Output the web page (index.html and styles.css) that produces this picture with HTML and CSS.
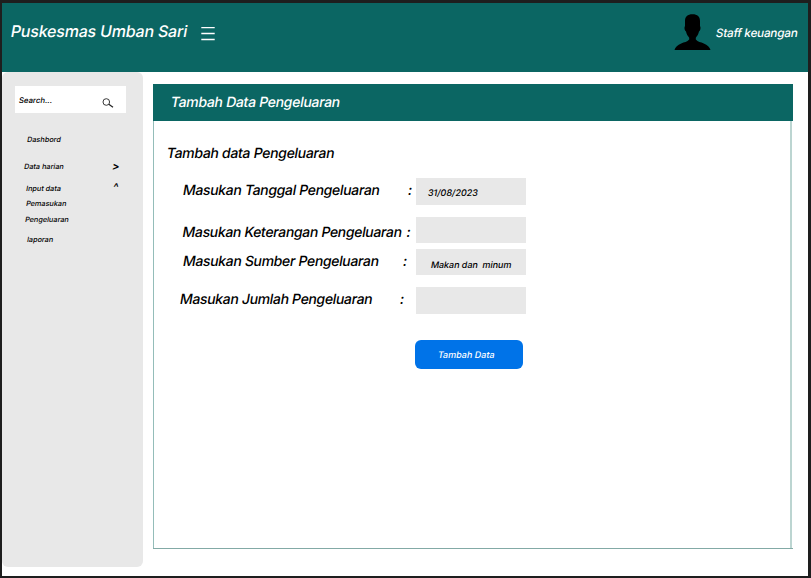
FILE: index.html
```html
<!DOCTYPE html>
<html lang="id">
<head>
<meta charset="utf-8">
<title>Puskesmas Umban Sari</title>
<link rel="stylesheet" href="styles.css">
</head>
<body>
<div class="page">
  <header class="topbar">
    <h1 class="brand"><span class="t">Puskesmas Umban Sari</span></h1>
    <svg class="menu" width="14" height="14" viewBox="0 0 14 14"><path d="M.3 .7h13.400M.3 6.500h13.400M.3 12.500h13.400" stroke="#fff" stroke-width="1.300"/></svg>
    <svg class="avatar" width="37" height="37" viewBox="0 0 37 37"><path d="M18.500.2C23.500.2 26 2.500 26 7v5c1 1.500.5 4.500-1 5.500-.5 2.500-1.700 4.500-3.200 6.200v1.800c2 2.500 5 2.500 8 4 3.500 1.500 6 3.700 6.700 6.500H.5c.7-2.800 3.200-5 6.700-6.500 3-1.500 6-1.500 8-4v-1.800c-1.500-1.700-2.700-3.700-3.200-6.200-1.500-1-2-4-1-5.500V7c0-4.500 2.500-6.800 7.500-6.800z"/></svg>
    <span class="user t">Staff keuangan</span>
  </header>
  <div class="content">
    <nav class="sidebar">
      <div class="search">
        <span class="t">Search...</span>
        <svg width="12" height="10" viewBox="0 0 12 10" fill="none" stroke="#222"><circle cx="4.300" cy="4" r="3.300" stroke-width=".9"/><path d="M6.800 6.200l4.200 3" stroke-width="1.200"/></svg>
      </div>
      <a class="item dash"><span class="t">Dashbord</span></a>
      <a class="item harian"><span class="t">Data harian</span><b class="t arrow">&gt;</b></a>
      <a class="item input"><span class="t">Input data</span><b class="t caret">^</b></a>
      <a class="item masuk"><span class="t">Pemasukan</span></a>
      <a class="item keluar"><span class="t">Pengeluaran</span></a>
      <a class="item laporan"><span class="t">laporan</span></a>
    </nav>
    <main class="panel">
      <h2 class="panel-title"><span class="t">Tambah Data Pengeluaran</span></h2>
      <form class="form">
        <h3 class="form-title"><span class="t">Tambah data Pengeluaran</span></h3>
        <div class="row tanggal"><label class="t">Masukan Tanggal Pengeluaran</label><i class="t">:</i><div class="field"><span class="t">31/08/2023</span></div></div>
        <div class="row keterangan"><label class="t">Masukan Keterangan Pengeluaran</label><i class="t">:</i><div class="field"></div></div>
        <div class="row sumber"><label class="t">Masukan Sumber Pengeluaran</label><i class="t">:</i><div class="field"><span class="t">Makan dan&nbsp; minum</span></div></div>
        <div class="row jumlah"><label class="t">Masukan Jumlah Pengeluaran</label><i class="t">:</i><div class="field"></div></div>
        <button class="submit" type="button"><span class="t">Tambah Data</span></button>
      </form>
    </main>
  </div>
</div>
</body>
</html>
```
FILE: styles.css
```css
* { box-sizing: border-box; }
body {
  margin: 0;
  height: 578px;
  padding: 3px 3px 2px 2px;
  background: #1e1e1e;
  font-family: Inter, "Liberation Sans", sans-serif;
  font-weight: 450;
  color: #000;
}
h1, h2, h3 { margin: 0; font-weight: 450; }
.t { display: inline-block; font-style: normal; transform: skewX(-10deg); white-space: nowrap; }
.page { height: 573px; background: #fff; }
.topbar {
  height: 69px;
  display: flex;
  align-items: flex-start;
  padding-left: 9px;
  background: #0b6663;
  color: #fff;
}
.brand { width: 190px; padding-top: 18px; font-size: 16px; line-height: 21px; letter-spacing: -0.2px; }
.menu { margin-top: 24px; }
.avatar { margin: 11px 0 0 459px; }
.user { margin: 22px 0 0 5px; font-size: 11.7px; line-height: 16px; letter-spacing: -0.2px; }
.content { display: flex; align-items: flex-start; gap: 10px; }
.sidebar {
  width: 141px;
  height: 495px;
  padding-top: 14px;
  display: flex;
  flex-direction: column;
  background: #e8e8e8;
  border-radius: 6px;
}
.search {
  width: 111px;
  height: 27px;
  margin: 0 0 22px 13px;
  padding: 0 12px 0 4px;
  display: flex;
  align-items: center;
  justify-content: space-between;
  background: #fff;
  font-size: 7.8px;
}
.search svg { margin-top: 6px; }
.item { display: flex; height: 10px; line-height: 10px; font-size: 7.3px; padding-right: 24px; justify-content: space-between; }
.item b { font-weight: 600; font-size: 11px; }
.item .arrow { margin-top: -1px; }
.item .caret { margin: -2px 1px 0 0; }
.dash { padding-left: 25px; }
.harian { padding-left: 22px; margin-top: 17px; }
.input { padding-left: 24px; margin-top: 12px; }
.masuk { padding-left: 23.5px; margin-top: 5px; }
.keluar { padding-left: 23px; margin-top: 6px; }
.laporan { padding-left: 25px; margin-top: 10px; }
.panel {
  width: 640px;
  height: 465px;
  margin-top: 12px;
  border-bottom: 1px solid #83aaa6;
}
.panel-title {
  height: 37px;
  padding-left: 17.5px;
  background: #0b6663;
  color: #fff;
  font-size: 14px;
  line-height: 36px;
  letter-spacing: -0.3px;
}
.form {
  width: 639px;
  height: 427px;
  padding-top: 23px;
  border-left: 1px solid #94bdb9;
  border-right: 2px solid #bcd5d1;
}
.form-title { margin-left: 12.500px; font-size: 14px; line-height: 18px; letter-spacing: -0.31px; }
.row { display: flex; height: 27px; font-size: 14px; line-height: 26px; letter-spacing: -0.34px; }
.row i { margin-left: auto; }
.row .field { flex: none; width: 110.5px; height: 26.5px; background: #e8e8e8; font-size: 9px; line-height: 31px; letter-spacing: 0; }
.tanggal { width: 372px; padding-left: 28.5px; margin-top: 16px; }
.tanggal label, .tanggal i { margin-top: -1px; }
.tanggal .field { margin-left: 4px; padding-left: 12px; line-height: 29px; }
.keterangan { width: 372px; padding-left: 29px; margin-top: 11.5px; }
.keterangan label, .keterangan i { padding-top: 2px; }
.keterangan .field { margin-left: 5px; }
.sumber { width: 372px; padding-left: 28.5px; margin-top: 5px; }
.sumber label, .sumber i { margin-top: -.5px; }
.sumber .field { margin-left: 9px; padding-left: 15px; letter-spacing: -0.05px; }
.jumlah { width: 372px; padding-left: 25.5px; margin-top: 11.5px; }
.jumlah label, .jumlah i { margin-top: -1px; }
.jumlah .field { margin-left: 12px; }
.submit {
  display: block;
  width: 108.5px;
  height: 29px;
  margin: 26px 0 0 260.5px;
  padding: 0 4px 0 0;
  border: 0;
  border-radius: 6px;
  background: #0073e8;
  color: #fff;
  font: inherit;
  font-size: 9px;
}
```
